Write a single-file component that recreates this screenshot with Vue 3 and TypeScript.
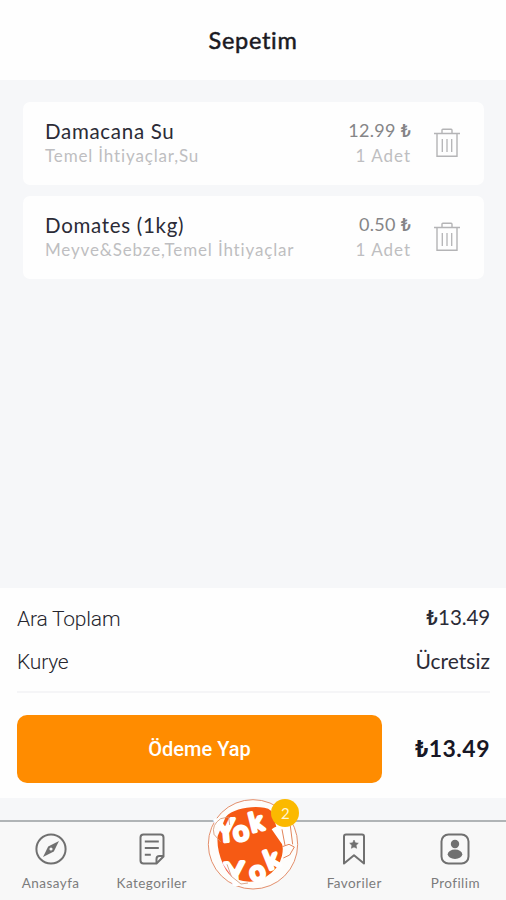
<script setup lang="ts">
interface CartItem {
  name: string
  categories: string
  price: string
  quantity: string
}

const items: CartItem[] = [
  { name: 'Damacana Su', categories: 'Temel İhtiyaçlar,Su', price: '12.99', quantity: '1 Adet' },
  { name: 'Domates (1kg)', categories: 'Meyve&Sebze,Temel İhtiyaçlar', price: '0.50', quantity: '1 Adet' },
]
</script>

<template>
  <div class="screen">
    <header class="header"><h1>Sepetim</h1></header>

    <main class="list">
      <article v-for="item in items" :key="item.name" class="card">
        <div class="info">
          <div class="name">{{ item.name }}</div>
          <div class="cats">{{ item.categories }}</div>
        </div>
        <div class="amount">
          <div class="price">{{ item.price }} <span class="lira">₺</span></div>
          <div class="qty">{{ item.quantity }}</div>
        </div>
        <button class="trash" aria-label="Sil">
          <svg width="28" height="32" viewBox="0 0 28 32" fill="none" stroke="#b4b4b6" stroke-width="1.4">
            <path d="M1 6.5h26M9 6V3.2q0-.9.9-.9h8.2q.9 0 .9.9V6M4 7v22.3h20V7" />
            <path d="M9.3 12v13M14 12v13M18.7 12v13" stroke-width="1.3" />
          </svg>
        </button>
      </article>
    </main>

    <section class="summary">
      <div class="row"><span class="label">Ara Toplam</span><span class="value num"><span class="lira">₺</span>13.49</span></div>
      <div class="row"><span class="label">Kurye</span><span class="value">Ücretsiz</span></div>
      <div class="divider"></div>
      <div class="checkout">
        <button class="pay">Ödeme Yap</button>
        <span class="total"><span class="lira">₺</span>13.49</span>
      </div>
    </section>

    <div class="spacer"></div>

    <nav class="tabs">
      <a class="tab">
        <svg width="32" height="32" viewBox="0 0 32 32" fill="none" stroke="#707070" stroke-width="2">
          <circle cx="16" cy="16" r="14.6" />
          <path d="M24 8 18.8 18.6 8 24 13.2 13.4Z" fill="#707070" stroke="none" />
          <circle cx="16" cy="16" r="2.2" fill="#f8f8f8" stroke-width="1.2" />
        </svg>
        <span>Anasayfa</span>
      </a>
      <a class="tab">
        <svg width="32" height="32" viewBox="0 0 32 32" fill="none" stroke="#707070" stroke-width="2" stroke-linejoin="round">
          <path d="M7.5 1.5h17q3 0 3 3v19l-7 7h-13q-3 0-3-3v-23q0-3 3-3Z" />
          <path d="M20.5 30v-4q0-3 3-3h4M8.8 8.5h14M8.8 15h14M8.8 21.7h6" />
        </svg>
        <span>Kategoriler</span>
      </a>
      <a class="tab" aria-label="Yok Yok">
        <svg class="logo" width="92" height="92" viewBox="52 38 276 276">
          <circle cx="190" cy="177" r="134" fill="#fefdfb" stroke="#e38f6c" stroke-width="3" />
          <path class="blob" d="M108 95C130 71 180 61 224 67Q250 71 252 94Q257 120 270 150Q284 180 277 211Q269 250 224 278Q187 298 140 282Q116 273 100 237Q80 190 84 152Z" />
          <g class="lettering">
            <text class="cap" transform="translate(82 171) rotate(-5)">Y</text>
            <text transform="translate(136 170) rotate(-12)">o</text>
            <text class="tall" transform="translate(187 141) rotate(-14)">k</text>
            <text class="cap" transform="translate(110 299) rotate(-4)">Y</text>
            <text transform="translate(187 291) rotate(-16)">o</text>
            <text class="tall" transform="translate(238 254) rotate(-22)">k</text>
          </g>
          <path d="M73 146q-8-27 20-46l24-5 3 24M72 146l21 24M112 237l13 36 29 23 21-3" fill="none" stroke="#d49675" stroke-width="2.5" />
          <path d="M246 132Q260 121 286 117Q294 113 302 122L308 170L309 187Q302 197 288 192Q268 164 246 132Z" fill="#fff" />
          <path d="M302 122 309 177M277 132l9 48M278 184l20-7 16 8-14 24-19 9" fill="none" stroke="#e2855b" stroke-width="3" />
        </svg>
        <span class="badge">2</span>
      </a>
      <a class="tab">
        <svg width="32" height="32" viewBox="0 0 32 32" fill="none" stroke="#707070" stroke-width="2" stroke-linejoin="round">
          <path d="M8 1.5h16q2 0 2 2v27l-10-8.2-10 8.2v-27q0-2 2-2Z" />
          <path d="m16 7 1.3 2.8 3 .4-2.2 2.1.5 3L16 13.9l-2.6 1.4.5-3-2.2-2.1 3-.4Z" fill="#707070" stroke-width=".6" />
        </svg>
        <span>Favoriler</span>
      </a>
      <a class="tab">
        <svg width="32" height="32" viewBox="0 0 32 32" fill="none" stroke="#707070" stroke-width="2">
          <rect x="2.5" y="1.5" width="27" height="29" rx="7" />
          <circle cx="16" cy="11" r="4.2" fill="#707070" stroke="none" />
          <ellipse cx="16" cy="21.3" rx="7.3" ry="4.7" fill="#707070" stroke="none" />
        </svg>
        <span>Profilim</span>
      </a>
    </nav>
  </div>
</template>

<style>
body {
  margin: 0;
}
</style>

<style scoped>
.screen {
  width: 506px;
  height: 900px;
  display: flex;
  flex-direction: column;
  overflow: hidden;
  background: #f6f7f9;
  font-family: Lato, "Liberation Sans", sans-serif;
  color: #2b2b36;
}
button {
  border: 0;
  padding: 0;
  background: none;
  font: inherit;
}
.header {
  flex: none;
  height: 80px;
  display: flex;
  align-items: center;
  justify-content: center;
  background: #fefefe;
}
h1 {
  margin: 0;
  font-size: 23.5px;
  line-height: 30px;
  font-weight: 400;
  -webkit-text-stroke: 0.5px #1a1a22;
  letter-spacing: 0.7px;
  color: #1a1a22;
}
.list {
  flex: 1;
  display: flex;
  flex-direction: column;
  gap: 11px;
  padding: 22px 22px 0 23px;
}
.card {
  height: 83px;
  box-sizing: border-box;
  display: flex;
  padding: 16px 23px 0 22px;
  background: #fefefe;
  border-radius: 7px;
}
.info {
  flex: 1;
}
.name {
  font-size: 20.5px;
  line-height: 26px;
  letter-spacing: 0.7px;
}
.cats,
.qty {
  font-size: 17px;
  line-height: 24px;
  letter-spacing: 0.85px;
  color: #bebec1;
}
.amount {
  text-align: right;
}
.price {
  font-size: 18px;
  line-height: 24px;
  margin-bottom: 1px;
  letter-spacing: 0.3px;
  color: #858587;
}
.qty {
  letter-spacing: 1px;
}
.price .lira {
  font-size: 18px;
}
.lira {
  font-family: Roboto, sans-serif;
  font-weight: 500;
  letter-spacing: 0;
}
.trash {
  width: 28px;
  height: 32px;
  margin: 9px 0 0 22px;
}
.summary {
  height: 210px;
  box-sizing: border-box;
  padding: 9px 16px 0 17px;
  background: #fefefe;
}
.row {
  height: 43px;
  display: flex;
  align-items: center;
  justify-content: space-between;
  font-size: 21px;
}
.label {
  font-family: Roboto, sans-serif;
  font-weight: 300;
  letter-spacing: -0.2px;
  color: #26262e;
}
.value {
  padding-bottom: 2px;
}
.num {
  font-size: 20.5px;
  letter-spacing: -0.1px;
}
.divider {
  height: 2px;
  margin-top: 8px;
  background: #f5f5f7;
}
.checkout {
  display: flex;
  align-items: center;
  justify-content: space-between;
  margin-top: 22px;
}
.pay {
  width: 365px;
  height: 68px;
  border-radius: 10px;
  background: #ff8c00;
  color: #fff;
  font: 500 20px Roboto, sans-serif;
}
.total {
  padding-bottom: 2px;
  font-size: 23px;
  font-weight: 700;
  letter-spacing: 0.5px;
  color: #171725;
}
.total .lira {
  font-weight: 700;
}
.spacer {
  height: 22px;
}
.tabs {
  height: 80px;
  box-sizing: border-box;
  display: grid;
  grid-template-columns: repeat(5, 1fr);
  border-top: 2px solid #b0b4b6;
  background: #f8f8f8;
}
.tab {
  position: relative;
  display: flex;
  flex-direction: column;
  align-items: center;
  padding-top: 11px;
  font-size: 13.5px;
  line-height: 18px;
  color: #7c7c7c;
}
.tab span:not(.badge) {
  margin-top: 9px;
  letter-spacing: 0.45px;
}
.logo {
  position: absolute;
  top: -24px;
  left: 5px;
}
.blob {
  fill: #f65a14;
}
.lettering {
  fill: #fff;
  stroke: #fff;
  stroke-width: 11;
  stroke-linejoin: round;
  font-family: Lato, sans-serif;
  font-weight: 400;
  font-size: 82px;
}
.lettering .cap {
  font-size: 92px;
}
.lettering .tall {
  font-size: 77px;
}
.badge {
  position: absolute;
  left: 69px;
  top: -23px;
  width: 28px;
  height: 28px;
  border-radius: 50%;
  background: #fbb900;
  color: #fff5d8;
  font-size: 15px;
  line-height: 28px;
  text-align: center;
}
</style>
